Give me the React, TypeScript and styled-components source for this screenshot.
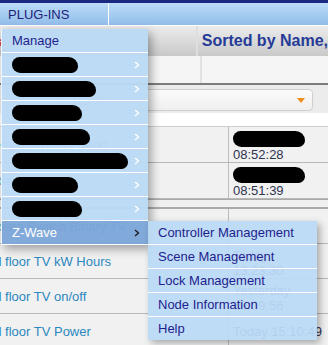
import styled, { createGlobalStyle } from "styled-components"

const GlobalStyle = createGlobalStyle`
  html, body {
    margin: 0;
    padding: 0;
    background: #f2f2f2;
    font-family: "Liberation Sans", Arial, sans-serif;
    overflow: hidden;
  }
`

const subItems = [
  "Controller Management",
  "Scene Management",
  "Lock Management",
  "Node Information",
  "Help",
]

// widths of the scribbled-out menu entries
const hidden = [66, 84, 70, 78, 116, 66, 70]

const rowsTop = [
  { name: "Temperature Legend", stamp: "08:52:28" },
  { name: "Fibaro Sensor", stamp: "08:51:39" },
]

const rowsBottom = [
  { name: "Fibaro Switch Binary TV", lines: [] as string[] },
  { name: "nd floor TV kW Hours", lines: ["Today", "13:23:30"] },
  { name: "nd floor TV on/off", lines: ["Yesterday", "19:09:56"] },
  { name: "nd floor TV Power", lines: ["Today 15:10:49"] },
]

export default function App() {
  return (
    <Page>
      <GlobalStyle />
      <TopStripe />
      <TabBar>
        <Tab>PLUG-INS</Tab>
      </TabBar>
      <HeaderRow>
        <HeadLeft>es.</HeadLeft>
        <HeadRight>Sorted by Name,</HeadRight>
      </HeaderRow>
      <SubHeaderRow>
        <SubLeft />
        <SubRight />
      </SubHeaderRow>
      <FilterBand>
        <Select>
          <SelectText>Room</SelectText>
          <Caret />
        </Select>
      </FilterBand>
      <WhiteStrip />
      <Table>
        {rowsTop.map((r) => (
          <Row key={r.stamp} $height={35}>
            <NameCell>{r.name}</NameCell>
            <StampCell>
              <Blob $width={72} />
              <div>{r.stamp}</div>
            </StampCell>
          </Row>
        ))}
        <Separator />
        {rowsBottom.map((r) => (
          <Row key={r.name} $height={34}>
            <NameCell>{r.name}</NameCell>
            <StampCell $center={r.lines.length === 1}>
              {r.lines.map((l) => (
                <div key={l}>{l}</div>
              ))}
            </StampCell>
          </Row>
        ))}
      </Table>

      <Menu>
        <MenuItem>Manage</MenuItem>
        {hidden.map((w, i) => (
          <MenuItem key={i}>
            <Blob $width={w} />
            <Chevron color="#ffffff" />
          </MenuItem>
        ))}
        <MenuItem $active>
          Z-Wave
          <Chevron color="#1a1a1a" />
          <SubMenu>
            {subItems.map((s) => (
              <SubItem key={s}>{s}</SubItem>
            ))}
          </SubMenu>
        </MenuItem>
      </Menu>
    </Page>
  )
}

function Chevron({ color }: { color: string }) {
  return (
    <ChevronIcon width="6" height="8" viewBox="0 0 6 8">
      <path d="M1 1 L4.5 4 L1 7" fill="none" stroke={color} strokeWidth="1.3" />
    </ChevronIcon>
  )
}

const Page = styled.div`
  position: relative;
  width: 328px;
  height: 345px;
  overflow: hidden;
`

const TopStripe = styled.div`
  height: 3px;
  background: #1b2a80;
`

const TabBar = styled.div`
  height: 22px;
  display: flex;
  background: linear-gradient(#bcdcf8, #92bde9);
  border-bottom: 1px solid #ffffff;
`

const Tab = styled.div`
  width: 100px;
  padding-left: 8px;
  border-right: 1px solid #ffffff;
  display: flex;
  align-items: center;
  font-size: 13px;
  color: #1d2178;
`

const HeaderRow = styled.div`
  height: 30px;
  display: flex;
  background: linear-gradient(#ececec, #c9c9c9);
`

const HeadLeft = styled.div`
  width: 200px;
  color: #d23a3a;
  font-size: 13px;
  font-weight: bold;
  line-height: 32px;
  text-indent: -12px;
`

const HeadRight = styled.div`
  flex: 1;
  border-left: 2px solid #dedede;
  padding-left: 4px;
  font-size: 16px;
  font-weight: bold;
  color: #253b97;
  line-height: 30px;
  white-space: nowrap;
`

const SubHeaderRow = styled.div`
  height: 27px;
  display: flex;
  background: #f5f5f5;
  border-bottom: 2px solid #7c7c7c;
`

const SubLeft = styled.div`
  width: 200px;
`

const SubRight = styled.div`
  flex: 1;
  border-left: 2px solid #e2e2e2;
`

const FilterBand = styled.div`
  height: 28px;
  background: #ececec;
  padding: 4px 15px 0 60px;
  box-sizing: border-box;
`

const Select = styled.div`
  height: 22px;
  box-sizing: border-box;
  border: 1px solid #cfcfcf;
  border-radius: 4px;
  background: linear-gradient(#fbfbfb, #efefef);
  display: flex;
  align-items: center;
  justify-content: space-between;
  padding: 0 7px 0 12px;
`

const SelectText = styled.span`
  font-size: 13px;
  color: #999999;
`

const Caret = styled.span`
  width: 0;
  height: 0;
  border-left: 4px solid transparent;
  border-right: 4px solid transparent;
  border-top: 5px solid #f08c1a;
`

const WhiteStrip = styled.div`
  height: 13px;
  background: #ffffff;
  border-bottom: 1px solid #cfcfcf;
`

const Table = styled.div`
  display: flex;
  flex-direction: column;
`

const Row = styled.div<{ $height: number }>`
  height: ${(p) => p.$height}px;
  display: flex;
  background: #f1f1f1;
  border-bottom: 1px solid #b7b7b7;
`

const NameCell = styled.div`
  width: 228px;
  border-right: 1px solid #bdbdbd;
  display: flex;
  align-items: center;
  font-size: 13px;
  color: #2b87bf;
  white-space: nowrap;
  overflow: hidden;
  text-indent: -13px;
`

const StampCell = styled.div<{ $center?: boolean }>`
  flex: 1;
  padding: ${(p) => (p.$center ? "0" : "4px")} 0 0 4px;
  display: flex;
  flex-direction: column;
  justify-content: ${(p) => (p.$center ? "center" : "flex-start")};
  font-size: 13px;
  line-height: 15px;
  color: #2e3350;
  white-space: nowrap;
`

const Separator = styled.div`
  height: 7px;
  background: #f0f0f0;
  border-top: 1px solid #a9a9a9;
  border-bottom: 2px solid #a9a9a9;
`

const Blob = styled.span<{ $width: number }>`
  display: block;
  width: ${(p) => p.$width}px;
  height: 16px;
  border-radius: 8px 10px 7px 9px;
  background: #000000;
`

const Menu = styled.div`
  position: absolute;
  left: 1px;
  top: 29px;
  width: 146px;
  border-left: 1px solid #eef4fb;
  box-shadow: 3px 4px 9px rgba(0, 0, 0, 0.35);
`

const MenuItem = styled.div<{ $active?: boolean }>`
  position: relative;
  height: 23px;
  border-bottom: 1px solid #ffffff;
  padding: 0 8px 0 10px;
  display: flex;
  align-items: center;
  justify-content: space-between;
  font-size: 13px;
  color: ${(p) => (p.$active ? "#ffffff" : "#1e1e8c")};
  background: ${(p) =>
    p.$active ? "rgba(124, 165, 215, 0.96)" : "rgba(187, 218, 246, 0.96)"};
`

const ChevronIcon = styled.svg`
  margin-left: auto;
  margin-right: 0;
`

const SubMenu = styled.div`
  position: absolute;
  left: 100%;
  top: 0;
  width: 169px;
  box-shadow: 3px 3px 7px rgba(0, 0, 0, 0.3);
`

const SubItem = styled.div`
  height: 23px;
  border-bottom: 1px solid #ffffff;
  padding-left: 10px;
  display: flex;
  align-items: center;
  font-size: 13px;
  color: #1e1e8c;
  background: rgba(187, 218, 246, 0.94);
  &:last-child {
    border-bottom: none;
  }
`
